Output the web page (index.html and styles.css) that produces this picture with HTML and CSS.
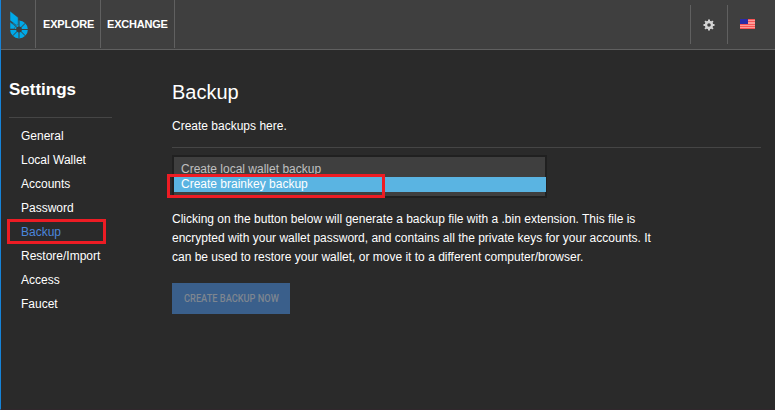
FILE: index.html
```html
<!DOCTYPE html>
<html lang="en">
<head>
<meta charset="utf-8">
<title>Settings - Backup</title>
<link rel="stylesheet" href="styles.css">
</head>
<body>
<div class="app">
  <header class="header">
    <a class="logo">
      <svg width="18" height="28" viewBox="0 0 18 28">
        <circle class="logo-wheel" cx="9" cy="18.5" r="5.9"/>
        <path class="logo-gap" d="M9 9.5V27.5M0 18.5H18M2.6 12.1L15.4 24.9M15.4 12.1L2.6 24.9"/>
        <path class="logo-mark" d="M0 0L8.2 6.5V13.6L6.4 14.2L0 9.4Z"/>
        <path class="logo-mark" d="M0 10.8L5.4 15.2L4.4 17.9H0Z"/>
      </svg>
    </a>
    <nav class="nav">
      <a class="nav-item explore">EXPLORE</a>
      <a class="nav-item exchange">EXCHANGE</a>
    </nav>
    <div class="tools">
      <a class="tool gear">
        <svg width="12" height="12" viewBox="0 0 12 12">
          <circle class="gear-ring" cx="6" cy="6" r="3"/>
          <path class="gear-teeth" d="M6 .5V2.2M6 9.8V11.5M.5 6H2.2M9.8 6H11.5M2.1 2.1L3.4 3.4M8.6 8.6L9.9 9.9M9.9 2.1L8.6 3.4M3.4 8.6L2.1 9.9"/>
        </svg>
      </a>
      <a class="tool flag">
        <svg width="15" height="10" viewBox="0 0 15 10" shape-rendering="crispEdges">
          <path fill="#f95555" d="M0 0H15V10H0Z"/>
          <path fill="#ff9c98" d="M0 1H15V2H0ZM0 3H15V5H0ZM0 6H15V7H0ZM0 8H15V9H0Z"/>
          <path fill="#2b2ba5" d="M0 0H8V5H0Z"/>
        </svg>
      </a>
    </div>
  </header>
  <main class="body">
    <aside class="sidebar">
      <h2>Settings</h2>
      <ul class="menu">
        <li>General</li>
        <li>Local Wallet</li>
        <li>Accounts</li>
        <li>Password</li>
        <li class="active">Backup<span class="mark mark-menu"></span></li>
        <li>Restore/Import</li>
        <li>Access</li>
        <li>Faucet</li>
      </ul>
    </aside>
    <section class="content">
      <h1>Backup</h1>
      <p class="intro">Create backups here.</p>
      <div class="select">
        <div class="option">Create local wallet backup</div>
        <div class="option selected">Create brainkey backup</div>
        <span class="mark mark-option"></span>
      </div>
      <p class="help">Clicking on the button below will generate a backup file with a .bin extension. This file is<br>encrypted with your wallet password, and contains all the private keys for your accounts. It<br>can be used to restore your wallet, or move it to a different computer/browser.</p>
      <button class="button" disabled><span class="button-label">CREATE BACKUP NOW</span></button>
    </section>
  </main>
</div>
</body>
</html>
```
FILE: styles.css
```css
* { box-sizing: border-box; }
body { margin: 0; font: 12px/24px "Liberation Sans", Arial, sans-serif; color: #fff; background: #2a2a2a; }
h1, h2, p, ul { margin: 0; padding: 0; }
.app { height: 410px; border-left: 1px solid #1683d8; border-bottom: 1px solid #30272c; overflow: hidden; }
.header { display: flex; height: 50px; background: #3f3f3f; border-bottom: 1px solid #606060; }
.logo { width: 35px; height: 48px; padding: 11px 0 0 9px; border-right: 1px solid #606060; }
.logo svg { display: block; }
.logo-mark { fill: #00a9e8; stroke: #3f3f3f; stroke-width: .5; }
.logo-wheel { fill: none; stroke: #00a9e8; stroke-width: 6; }
.logo-gap { fill: none; stroke: #3f3f3f; stroke-width: 1; }
.nav { display: flex; height: 48px; }
.nav-item { display: block; padding: 12px 0 0 7px; font-size: 11px; letter-spacing: -.2px; font-weight: bold; border-right: 1px solid #606060; }
.explore { width: 65px; }
.exchange { width: 74px; padding-left: 6px; }
.tools { display: flex; margin: 5px 7px 0 auto; height: 39px; }
.tool { display: flex; justify-content: center; align-items: center; border-left: 1px solid #606060; }
.gear { width: 37px; padding-right: 1px; }
.flag { width: 41px; padding: 0 2px 1px 0; }
.gear-ring { fill: none; stroke: #d4d4d4; stroke-width: 2.4; }
.gear-teeth { fill: none; stroke: #d4d4d4; stroke-width: 2; }
.body { display: flex; padding-left: 8px; }
.sidebar { width: 103px; }
h2 { height: 68px; padding-top: 28px; font-size: 17px; line-height: 24px; border-bottom: 1px solid #454545; }
.menu { list-style: none; padding: 6px 0 0 12px; }
.menu li { position: relative; height: 24px; white-space: nowrap; }
.menu .active { color: #4a86dc; }
.mark { position: absolute; border: 3px solid #ed1c24; }
.mark-menu { left: -14px; top: -1px; width: 99px; height: 25px; }
.content { width: 589px; margin-left: 60px; }
h1 { padding-top: 27px; font-size: 20px; line-height: 30px; font-weight: normal; }
.intro { height: 41px; padding-top: 7px; border-bottom: 1px solid #454545; }
.select { position: relative; width: 375px; height: 43px; margin-top: 7px; padding: 5px 0 0; background: #3f3f3f; border: 2px solid #202020; }
.option { height: 15px; padding-left: 7px; line-height: 15px; color: #c0c0c0; }
.selected { margin-right: -1px; color: #fff; background: #5ab4e2; }
.mark-option { left: -7px; top: 17px; width: 218px; height: 24px; }
.help { margin-top: 12px; line-height: 19px; white-space: nowrap; }
.button { display: block; width: 118px; height: 31px; margin-top: 16px; padding: 0; border: 0; background: #3a5f8b; color: #7e8690; font: 500 11px/31px Roboto, sans-serif; }
.button-label { display: inline-block; white-space: nowrap; transform: scaleX(.84); }
```
